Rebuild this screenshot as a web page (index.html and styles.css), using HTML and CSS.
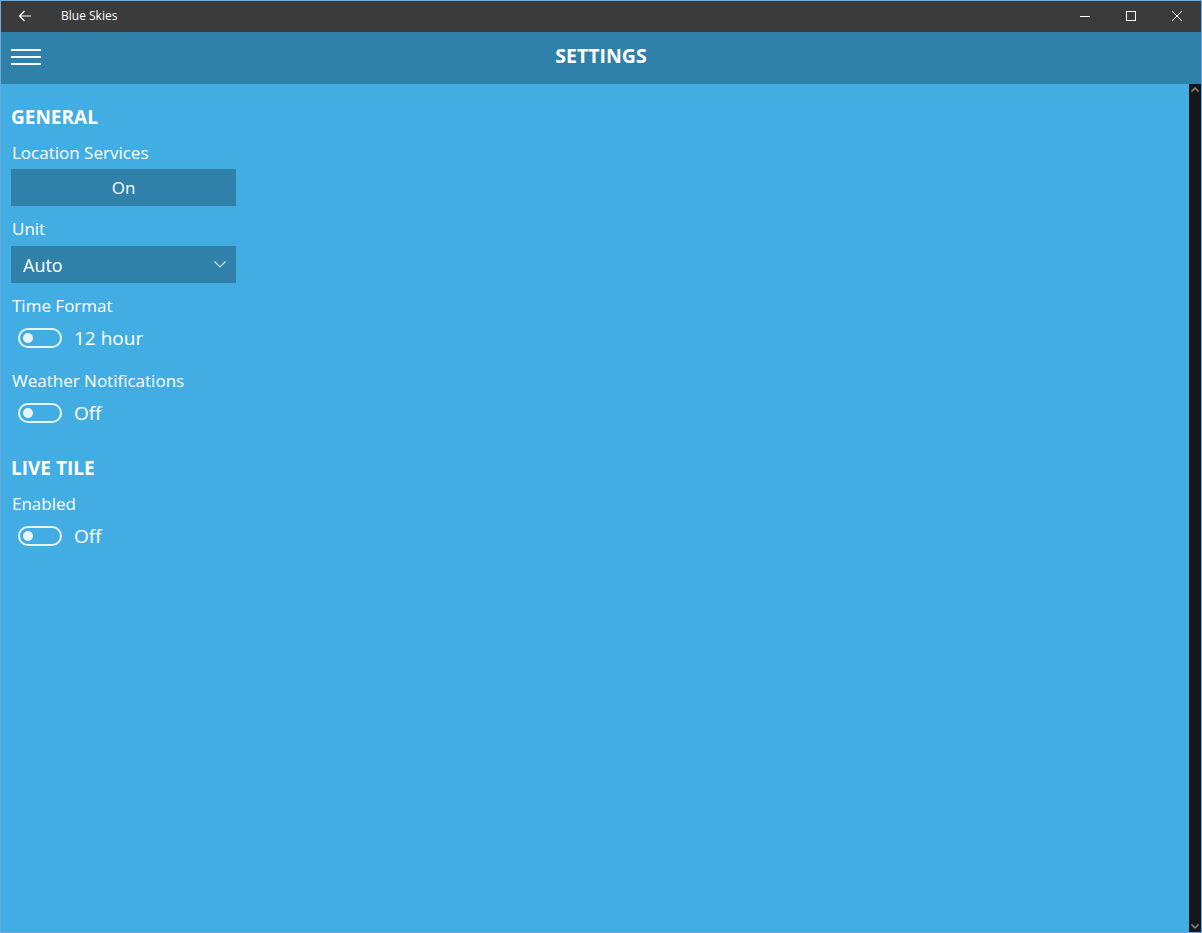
FILE: index.html
```html
<!DOCTYPE html>
<html lang="en">
<head>
  <meta charset="UTF-8" />
  <title>Blue Skies - Settings</title>
  <link rel="stylesheet" href="styles.css">
</head>
<body>
  <div class="window">
    <div class="titlebar">
      <svg class="back" width="14" height="12" viewBox="0 0 14 12">
        <path d="M13 6H1.5M6.5 1L1.5 6l5 5" fill="none" stroke="#fff" stroke-width="1.2"/>
      </svg>
      <span class="app-name">Blue Skies</span>
      <div class="controls">
        <svg width="46" height="30" viewBox="0 0 46 30"><path d="M18 15.5h10" stroke="#fff" stroke-width="1"/></svg>
        <svg width="46" height="30" viewBox="0 0 46 30"><rect x="18.5" y="10.5" width="9" height="9" fill="none" stroke="#fff" stroke-width="1"/></svg>
        <svg width="46" height="30" viewBox="0 0 46 30"><path d="M18 10l10 10M28 10L18 20" stroke="#fff" stroke-width="1"/></svg>
      </div>
    </div>

    <header class="header">
      <svg class="menu" width="30" height="16" viewBox="0 0 30 16">
        <path d="M0 1h30M0 8h30M0 15h30" stroke="#fff" stroke-width="2"/>
      </svg>
      <h1>SETTINGS</h1>
    </header>

    <div class="body">
      <main class="content">
        <h2 class="section">GENERAL</h2>
        <div class="label first">Location Services</div>
        <button class="btn">On</button>

        <div class="label">Unit</div>
        <div class="select">
          <span>Auto</span>
          <svg width="12" height="7" viewBox="0 0 12 7"><path d="M0.5 0.5L6 6l5.5-5.5" fill="none" stroke="#cfe6f3" stroke-width="1.2"/></svg>
        </div>

        <div class="label">Time Format</div>
        <div class="toggle-row">
          <span class="toggle"><span class="knob"></span></span>
          <span class="toggle-text">12 hour</span>
        </div>

        <div class="label spaced">Weather Notifications</div>
        <div class="toggle-row">
          <span class="toggle"><span class="knob"></span></span>
          <span class="toggle-text">Off</span>
        </div>

        <h2 class="section second">LIVE TILE</h2>
        <div class="label first">Enabled</div>
        <div class="toggle-row">
          <span class="toggle"><span class="knob"></span></span>
          <span class="toggle-text">Off</span>
        </div>
      </main>
      <div class="scrollbar">
        <svg width="12" height="12" viewBox="0 0 12 12"><path d="M2.5 7.5L6 4l3.5 3.5" fill="none" stroke="#8a8a8a" stroke-width="1.5"/></svg>
        <svg width="12" height="12" viewBox="0 0 12 12"><path d="M2.5 4.5L6 8l3.5-3.5" fill="none" stroke="#8a8a8a" stroke-width="1.5"/></svg>
      </div>
    </div>
  </div>
</body>
</html>
```

FILE: styles.css
```css
:root {
  --titlebar: #3b3b3b;
  --header: #2f81aa;
  --sky: #42ade2;
  --scroll: #171717;
  --frame: #6fa8dc;
}

* {
  box-sizing: border-box;
}

body {
  margin: 0;
  font-family: 'Open Sans', 'Noto Sans', sans-serif;
  background: var(--sky);
  color: white;
}

.window {
  height: 933px;
  border: 1px solid var(--frame);
  display: flex;
  flex-direction: column;
}

.titlebar {
  height: 31px;
  background: var(--titlebar);
  display: flex;
  align-items: center;
  padding-bottom: 2px;
}

.back {
  margin-left: 17px;
}

.app-name {
  margin-left: 29px;
  font-size: 12px;
}

.controls {
  margin-left: auto;
  margin-right: 1px;
  display: flex;
}

.header {
  height: 52px;
  background: var(--header);
  display: flex;
  align-items: center;
  position: relative;
}

.menu {
  margin-left: 10px;
  margin-bottom: 2px;
}

.header h1 {
  position: absolute;
  left: 0;
  right: 0;
  margin: 0;
  text-align: center;
  font-size: 19.5px;
  font-weight: bold;
  line-height: 24px;
  top: 12px;
}

.body {
  flex: 1;
  display: flex;
}

.content {
  flex: 1;
  padding: 21px 10px 0;
  display: flex;
  flex-direction: column;
  align-items: flex-start;
}

.section {
  margin: 0;
  font-size: 19px;
  line-height: 24px;
  font-weight: bold;
}

.section.second {
  margin-top: 27px;
}

.label {
  font-size: 17px;
  line-height: 24px;
  margin-top: 11px;
  padding-left: 1px;
}

.label.first {
  margin-top: 12px;
}

.label.spaced {
  margin-top: 15px;
}

.btn {
  margin-top: 4px;
  width: 225px;
  height: 37px;
  border: none;
  background: var(--header);
  color: white;
  font-family: inherit;
  font-size: 17px;
}

.select {
  margin-top: 5px;
  width: 225px;
  height: 37px;
  background: var(--header);
  display: flex;
  align-items: center;
  justify-content: space-between;
  padding: 0 10px 0 12px;
  font-size: 18px;
}

.toggle-row {
  margin-top: 4px;
  height: 32px;
  display: flex;
  align-items: center;
  padding-left: 7px;
}

.toggle {
  width: 44px;
  height: 20px;
  border: 2px solid #e6f4fb;
  border-radius: 10px;
  display: flex;
  align-items: center;
  padding-left: 3px;
}

.knob {
  width: 10px;
  height: 10px;
  border-radius: 50%;
  background: #e6f4fb;
}

.toggle-text {
  margin-left: 12px;
  font-size: 19px;
}

.scrollbar {
  width: 12px;
  background: var(--scroll);
  display: flex;
  flex-direction: column;
  justify-content: space-between;
}
```
